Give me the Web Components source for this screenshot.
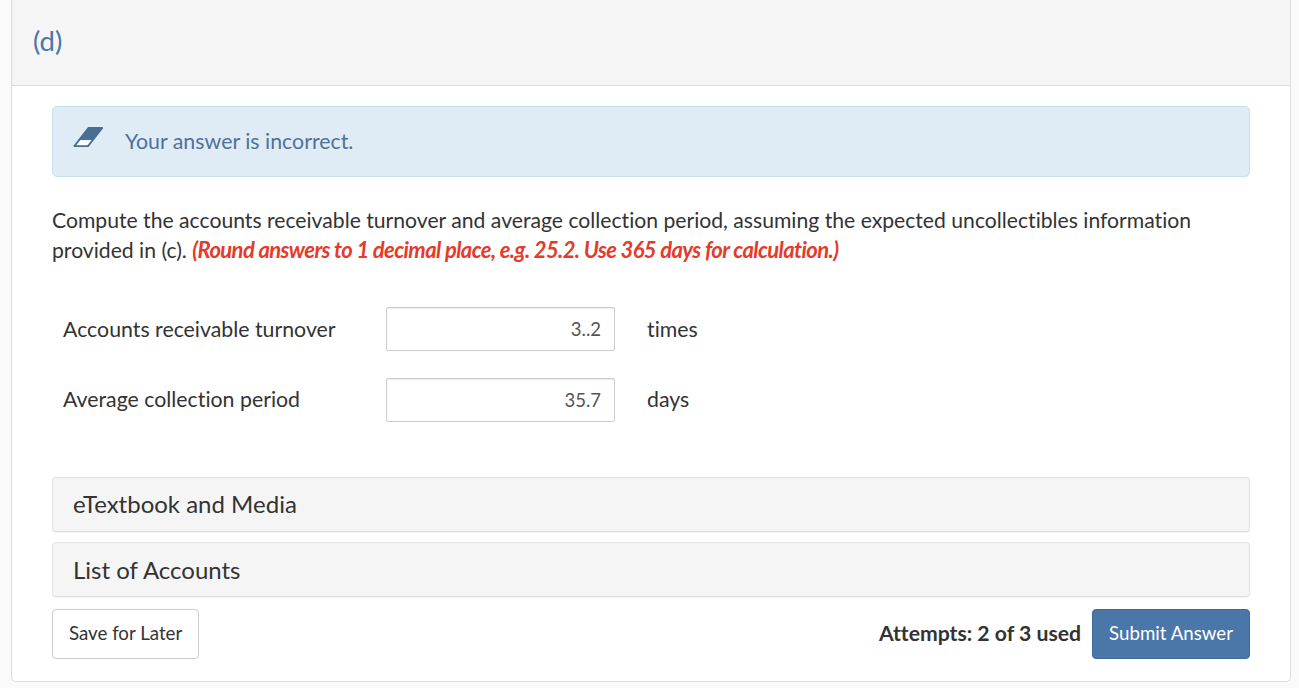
<!DOCTYPE html>
<html>
<head>
<meta charset="utf-8">
<style>
  html, body { margin: 0; height: 688px; overflow: hidden; background: #fafafa; }
  body {
    font-family: Lato, sans-serif;
    font-variant-ligatures: none;
    color: #333;
    padding: 0 8px 0 11px;
    box-sizing: border-box;
  }
</style>
</head>
<body>
<question-panel heading="(d)">
  <feedback-alert>Your answer is incorrect.</feedback-alert>
  <question-text>
    Compute the accounts receivable turnover and average collection period, assuming the expected uncollectibles information provided in (c).
    <em slot="hint">(Round answers to 1 decimal place, e.g. 25.2. Use 365 days for calculation.)</em>
  </question-text>
  <answer-row label="Accounts receivable turnover" value="3..2" unit="times"></answer-row>
  <answer-row label="Average collection period" value="35.7" unit="days"></answer-row>
  <resource-bar style="margin-top:55px;padding-bottom:3px">eTextbook and Media</resource-bar>
  <resource-bar style="margin-top:10px">List of Accounts</resource-bar>
  <submit-bar used="Attempts: 2 of 3 used"></submit-bar>
</question-panel>

<script>
class QuestionPanel extends HTMLElement {
  constructor() {
    super();
    this.attachShadow({mode: 'open'}).innerHTML = `
      <style>
        :host {
          display: block;
          height: 682px;
          box-sizing: border-box;
          background: #fff;
          border: 1px solid #ddd;
          border-top: none;
          border-radius: 0 0 5px 5px;
        }
        .heading {
          height: 86px;
          box-sizing: border-box;
          background: #f5f5f5;
          border-bottom: 1px solid #ddd;
          padding: 23px 21px 0;
          color: #4a76a8;
          font-size: 27.5px;
          line-height: 36px;
        }
        .body { padding: 20px 40px 0; }
      </style>
      <div class="heading"></div>
      <div class="body"><slot></slot></div>
    `;
    this.shadowRoot.querySelector('.heading').textContent = this.getAttribute('heading');
  }
}
customElements.define('question-panel', QuestionPanel);

class FeedbackAlert extends HTMLElement {
  constructor() {
    super();
    this.attachShadow({mode: 'open'}).innerHTML = `
      <style>
        :host {
          display: flex;
          align-items: center;
          height: 71px;
          box-sizing: border-box;
          background: #dfebf5;
          border: 1px solid #c5e2ef;
          border-radius: 5px;
          padding: 0 20px 2px;
          color: #50729a;
          font-size: 21.35px;
        }
        svg { width: 32px; height: 22px; margin: 0 20px 7px 0; flex: none; }
      </style>
      <svg viewBox="0 0 32 22">
        <path d="M15.6 1.9H29.2L15 20.1H1.4Z" fill="#fff" stroke="#4a6d94" stroke-width="1.8" stroke-linejoin="round"/>
        <path d="M15.6 1.9H29.2L20 13.6H6Z" fill="#4a6d94" stroke="#4a6d94" stroke-width="1" stroke-linejoin="round"/>
      </svg>
      <span><slot></slot></span>
    `;
  }
}
customElements.define('feedback-alert', FeedbackAlert);

class QuestionText extends HTMLElement {
  constructor() {
    super();
    this.attachShadow({mode: 'open'}).innerHTML = `
      <style>
        :host {
          display: block;
          margin-top: 28px;
          font-size: 21.17px;
          line-height: 30px;
          color: #333;
        }
        ::slotted(em) {
          color: #e63a2a;
          font-weight: 700;
          font-style: italic;
          font-size: 22px;
          letter-spacing: -0.6px;
        }
      </style>
      <slot></slot> <slot name="hint"></slot>
    `;
  }
}
customElements.define('question-text', QuestionText);

class AnswerRow extends HTMLElement {
  constructor() {
    super();
    this.attachShadow({mode: 'open'}).innerHTML = `
      <style>
        :host {
          display: flex;
          align-items: center;
          height: 44px;
          margin-top: 27px;
          padding-left: 11px;
          font-size: 21.3px;
          color: #333;
        }
        :host(:first-of-type) { margin-top: 42px; }
        .label { width: 323px; flex: none; padding-bottom: 2px; }
        .field {
          width: 229px;
          height: 44px;
          box-sizing: border-box;
          border: 1px solid #ccc;
          border-radius: 2px;
          box-shadow: inset 0 1px 1px rgba(0,0,0,.075);
          text-align: right;
          padding: 0 13px;
          line-height: 42px;
          font-size: 18.5px;
          color: #555;
          flex: none;
        }
        .unit { margin-left: 32px; padding-bottom: 2px; }
        :host(:first-of-type) .label, :host(:first-of-type) .unit { padding-bottom: 0; }
      </style>
      <span class="label"></span>
      <span class="field"></span>
      <span class="unit"></span>
    `;
    this.shadowRoot.querySelector('.label').textContent = this.getAttribute('label');
    this.shadowRoot.querySelector('.field').textContent = this.getAttribute('value');
    this.shadowRoot.querySelector('.unit').textContent = this.getAttribute('unit');
  }
}
customElements.define('answer-row', AnswerRow);

class ResourceBar extends HTMLElement {
  constructor() {
    super();
    this.attachShadow({mode: 'open'}).innerHTML = `
      <style>
        :host {
          display: flex;
          align-items: center;
          height: 55px;
          box-sizing: border-box;
          background: #f5f5f5;
          border: 1px solid #e3e3e3;
          border-bottom-color: #ddd;
          border-radius: 4px;
          box-shadow: 0 1px 1px rgba(0,0,0,.05);
          padding: 0 20px 1px;
          font-size: 24px;
          color: #333;
        }
      </style>
      <slot></slot>
    `;
  }
}
customElements.define('resource-bar', ResourceBar);

class SubmitBar extends HTMLElement {
  constructor() {
    super();
    this.attachShadow({mode: 'open'}).innerHTML = `
      <style>
        :host {
          display: flex;
          align-items: center;
          margin-top: 12px;
          height: 50px;
        }
        .btn {
          height: 50px;
          box-sizing: border-box;
          display: flex;
          align-items: center;
          border-radius: 4px;
          font-size: 18.7px;
          padding: 0 16px 3px;
        }
        .save { background: #fff; border: 1px solid #ccc; color: #333; }
        .used { margin-left: auto; margin-right: 11px; padding-bottom: 3px; font-size: 21.2px; font-weight: 700; color: #333; }
        .submit { background: #4a76a8; border: 1px solid #43699a; color: #fff; }
      </style>
      <span class="btn save">Save for Later</span>
      <span class="used"></span>
      <span class="btn submit">Submit Answer</span>
    `;
    this.shadowRoot.querySelector('.used').textContent = this.getAttribute('used');
  }
}
customElements.define('submit-bar', SubmitBar);
</script>
</body>
</html>
